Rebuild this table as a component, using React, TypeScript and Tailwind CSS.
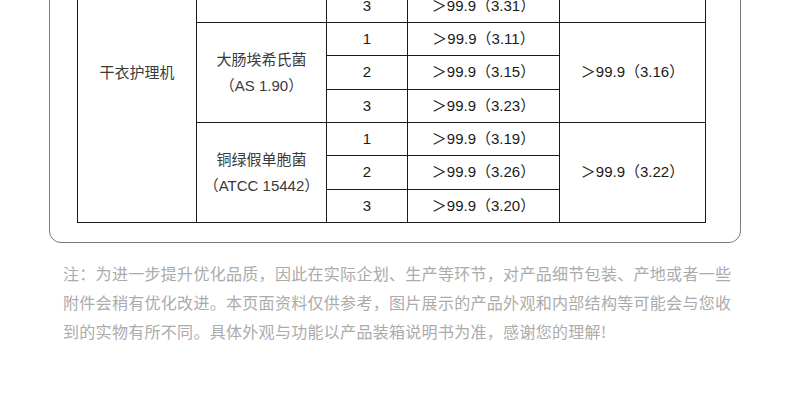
const groups = [
  {
    name: '金黄色葡萄球菌',
    strain: '（ATCC 6538）',
    values: ['＞99.9（3.28）', '＞99.9（3.35）', '＞99.9（3.31）'],
    avg: '＞99.9（3.31）',
  },
  {
    name: '大肠埃希氏菌',
    strain: '（AS 1.90）',
    values: ['＞99.9（3.11）', '＞99.9（3.15）', '＞99.9（3.23）'],
    avg: '＞99.9（3.16）',
  },
  {
    name: '铜绿假单胞菌',
    strain: '（ATCC 15442）',
    values: ['＞99.9（3.19）', '＞99.9（3.26）', '＞99.9（3.20）'],
    avg: '＞99.9（3.22）',
  },
]

const noteLines = [
  '注：为进一步提升优化品质，因此在实际企划、生产等环节，对产品细节包装、产地或者一些',
  '附件会稍有优化改进。本页面资料仅供参考，图片展示的产品外观和内部结构等可能会与您收',
  '到的实物有所不同。具体外观与功能以产品装箱说明书为准，感谢您的理解!',
]

const cell = 'border border-[#1a1a1a] text-center align-middle p-0'

const App = () => {
  return (
    <div className="w-[790px] h-[415px] overflow-hidden bg-white font-['Liberation_Sans','Noto_Sans_CJK_SC',sans-serif]">
      {/* card, top part is cut off above the window */}
      <div className="ml-[49px] w-[692px] -mt-[100px] pt-[21px] pb-[19px] border border-[#7a7a7a] rounded-[12px]">
        <table className="ml-[27px] w-[628px] border-collapse table-fixed">
          <colgroup>
            <col className="w-[119px]" />
            <col className="w-[130px]" />
            <col className="w-[81px]" />
            <col className="w-[152px]" />
            <col className="w-[146px]" />
          </colgroup>
          <tbody>
            {groups.map((g, gi) =>
              g.values.map((v, i) => (
                <tr key={`${gi}-${i}`} className="h-[33.33px]">
                  {gi === 0 && i === 0 && (
                    <td rowSpan={9} className={`${cell} text-[15px] text-[#3a3a3a] pt-[1px]`}>
                      干衣护理机
                    </td>
                  )}
                  {i === 0 && (
                    <td rowSpan={3} className={`${cell} text-[15px] text-[#3a3a3a] leading-[26px] pt-[1px]`}>
                      <div>{g.name}</div>
                      <div>{g.strain}</div>
                    </td>
                  )}
                  <td className={`${cell} text-[15px] text-[#1a1a1a]`}>{i + 1}</td>
                  <td className={`${cell} text-[15px] text-[#1a1a1a]`}>{v}</td>
                  {i === 0 && (
                    <td rowSpan={3} className={`${cell} text-[15px] text-[#1a1a1a]`}>
                      {g.avg}
                    </td>
                  )}
                </tr>
              )),
            )}
          </tbody>
        </table>
      </div>

      {/* note */}
      <div className="mt-[16px] ml-[63px] text-[16px] leading-[29px] tracking-[0.3px] text-[#ababab] font-['Noto_Sans_CJK_SC',sans-serif]">
        {noteLines.map(line => (
          <div key={line} className="whitespace-nowrap">{line}</div>
        ))}
      </div>
    </div>
  )
}

export default App
